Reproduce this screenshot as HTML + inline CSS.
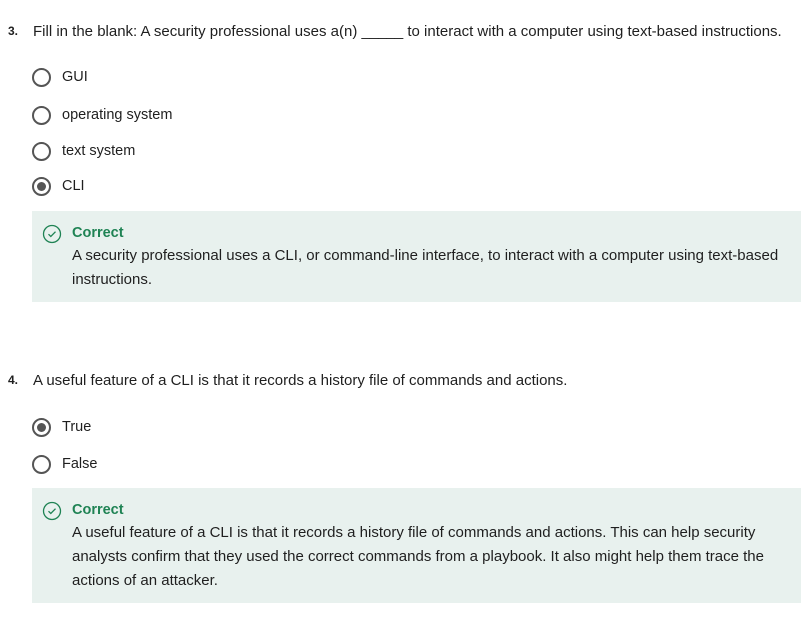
<!DOCTYPE html>
<html><head><style>
body{margin:0;width:812px;height:618px;background:#fff;font-family:"Liberation Sans",sans-serif;color:#1f1f1f;position:relative;overflow:hidden}
.a{position:absolute;white-space:nowrap;font-size:14.5px}
.q{position:absolute;white-space:nowrap;font-size:15px}
.num{position:absolute;font-weight:bold;font-size:12px;color:#1f1f1f}
.r{position:absolute;width:15px;height:15px;border:2px solid #555;border-radius:50%;box-sizing:content-box}
.r.on::after{content:"";position:absolute;left:3px;top:3px;width:9px;height:9px;border-radius:50%;background:#555}
.box{position:absolute;left:32px;width:769px;background:#e8f1ee}
.ok{position:absolute;left:72px;color:#1f8354;font-weight:bold;font-size:14.5px}
.ic{position:absolute;left:42px}
.t{position:absolute;left:72px;width:720px;font-size:15px;line-height:24px}
</style></head><body>
<div class="num" style="left:8px;top:24px">3.</div>
<div class="q" style="left:33px;top:23px">Fill in the blank: A security professional uses a(n) _____ to interact with a computer using text-based instructions.</div>
<div class="r" style="left:32px;top:68px"></div><div class="a" style="left:62px;top:69px">GUI</div>
<div class="r" style="left:32px;top:106px"></div><div class="a" style="left:62px;top:107px">operating system</div>
<div class="r" style="left:32px;top:142px"></div><div class="a" style="left:62px;top:143px">text system</div>
<div class="r on" style="left:32px;top:177px"></div><div class="a" style="left:62px;top:178px">CLI</div>
<div class="box" style="top:211px;height:91px"></div>
<svg class="ic" style="top:224px" width="20" height="20" viewBox="0 0 20 20"><circle cx="10" cy="10" r="8.5" fill="none" stroke="#1f8354" stroke-width="1.3"/><path d="M6.5 10.2l2.3 2.3 4.7-4.8" fill="none" stroke="#1f8354" stroke-width="1.3"/></svg>
<div class="ok" style="top:225px">Correct</div>
<div class="t" style="top:244px">A security professional uses a CLI, or command-line interface, to interact with a computer using text-based instructions.</div>
<div class="num" style="left:8px;top:373px">4.</div>
<div class="q" style="left:33px;top:372px">A useful feature of a CLI is that it records a history file of commands and actions.</div>
<div class="r on" style="left:32px;top:418px"></div><div class="a" style="left:62px;top:419px">True</div>
<div class="r" style="left:32px;top:455px"></div><div class="a" style="left:62px;top:456px">False</div>
<div class="box" style="top:488px;height:115px"></div>
<svg class="ic" style="top:501px" width="20" height="20" viewBox="0 0 20 20"><circle cx="10" cy="10" r="8.5" fill="none" stroke="#1f8354" stroke-width="1.3"/><path d="M6.5 10.2l2.3 2.3 4.7-4.8" fill="none" stroke="#1f8354" stroke-width="1.3"/></svg>
<div class="ok" style="top:502px">Correct</div>
<div class="t" style="top:521px;width:700px">A useful feature of a CLI is that it records a history file of commands and actions. This can help security<br>analysts confirm that they used the correct commands from a playbook. It also might help them trace the<br>actions of an attacker.</div>
</body></html>
